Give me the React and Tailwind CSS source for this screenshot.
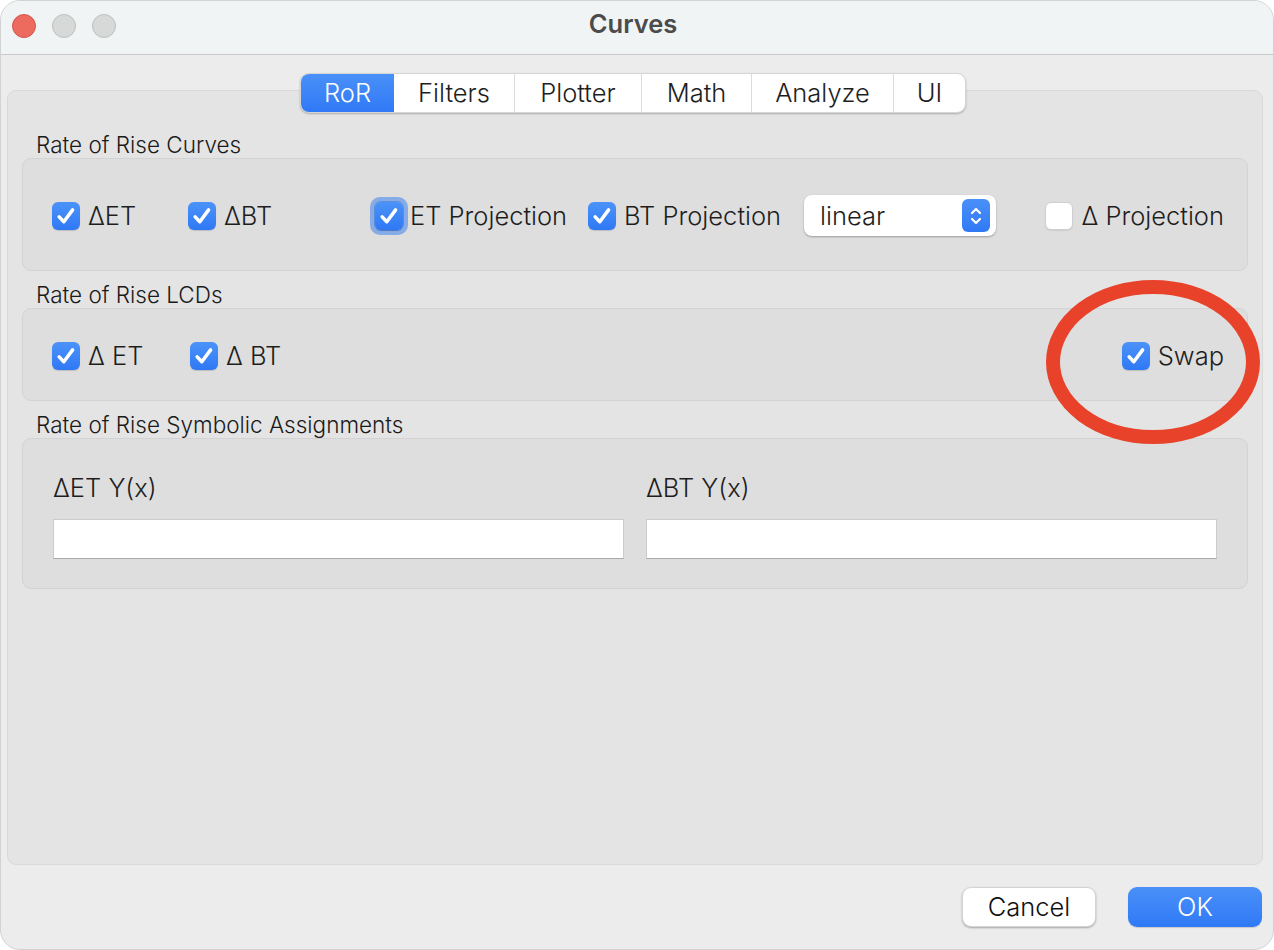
import React from "react";

const FONT = { fontFamily: "Inter, 'Noto Sans', 'Liberation Sans', sans-serif" };

function Check({ checked = true, focus = false }) {
  const box = checked ? (
    <div className="w-[28px] h-[28px] rounded-[6px] bg-gradient-to-b from-[#4b93f9] to-[#2f78f5] flex items-center justify-center shadow-[0_1px_1px_rgba(0,0,0,0.15)]">
      <svg width="22" height="22" viewBox="0 0 20 20" fill="none">
        <path d="M3.8 10.8 L8 15.2 L16 4.4" stroke="white" strokeWidth="3.2" strokeLinecap="round" strokeLinejoin="round" />
      </svg>
    </div>
  ) : (
    <div className="w-[28px] h-[28px] rounded-[6px] bg-white border border-[#cfcfcf] shadow-[0_1px_1px_rgba(0,0,0,0.08)]" />
  );
  if (!focus) return box;
  return (
    <div className="-m-[6px] p-[4px] rounded-[10px] bg-[#6f9ee6]/80 shrink-0">
      <div className="rounded-[7px] border border-[#5b8fe0]">{box}</div>
    </div>
  );
}

function Item({ label, checked, focus, w }) {
  return (
    <div className="flex items-center gap-[8px] shrink-0" style={{ width: w }}>
      <Check checked={checked} focus={focus} />
      <span className="text-[25.5px] font-light text-[#1e1e1e] leading-none whitespace-nowrap">{label}</span>
    </div>
  );
}

function SectionLabel({ children }) {
  return (
    <div className="ml-[14px] h-[24px] flex items-center text-[22.5px] font-light text-[#1a1a1a] leading-none">
      {children}
    </div>
  );
}

function Group({ className, children }) {
  return (
    <div className={`rounded-[9px] bg-[#dedede] border border-[#d3d3d3] ${className}`}>{children}</div>
  );
}

export default function App() {
  const tabs = [
    { name: "RoR", w: 93 },
    { name: "Filters", w: 120 },
    { name: "Plotter", w: 127 },
    { name: "Math", w: 110 },
    { name: "Analyze", w: 142 },
    { name: "UI", w: 72 },
  ];

  return (
    <div className="w-[1274px] h-[950px] bg-white" style={FONT}>
      <div className="relative w-[1274px] h-[950px] rounded-[20px] overflow-hidden bg-[#ececec] border border-[#d2d2d2] flex flex-col">
        {/* title bar */}
        <div className="h-[54px] shrink-0 bg-[#f1f4f4] border-b border-[#c9c9c9] flex items-center relative">
          <div className="flex items-center gap-[16px] pl-[11px] -mt-[4px]">
            <div className="w-[24px] h-[24px] rounded-full bg-[#ec6a5e] border border-[#d5574c]" />
            <div className="w-[24px] h-[24px] rounded-full bg-[#d6d9d8] border border-[#bdbfbe]" />
            <div className="w-[24px] h-[24px] rounded-full bg-[#d6d9d8] border border-[#bdbfbe]" />
          </div>
          <div className="absolute inset-0 flex items-center justify-center pointer-events-none pb-[6px]">
            <span className="text-[25.5px] font-semibold text-[#4b4b4b] -ml-[8px]">Curves</span>
          </div>
        </div>

        {/* body */}
        <div className="flex-1 flex flex-col pl-[6px] pr-[10px] pt-[18px]">
          {/* tabs */}
          <div className="relative z-10 flex justify-center">
            <div className="flex h-[40px] rounded-[9px] bg-white shadow-[0_1px_2px_rgba(0,0,0,0.25)] border border-[#d6d6d6] overflow-hidden -ml-[4px]">
              {tabs.map((t, i) => (
                <div
                  key={t.name}
                  style={{ width: t.w }}
                  className={`flex items-center justify-center text-[25.5px] font-light leading-none ${
                    i === 0
                      ? "bg-gradient-to-b from-[#4a90f8] to-[#2f79f6] text-white"
                      : "text-[#1e1e1e]"
                  } ${i > 1 ? "border-l border-[#dcdcdc]" : ""}`}
                >
                  {t.name}
                </div>
              ))}
            </div>
          </div>

          {/* panel */}
          <div className="-mt-[23px] h-[775px] rounded-[9px] bg-[#e4e4e4] border border-[#d9d9d9] pt-[42px] px-[14px] flex flex-col">
            <SectionLabel>Rate of Rise Curves</SectionLabel>
            <Group className="mt-[1px] h-[113px] flex items-center pl-[29px] pr-[23px] pt-[2px]">
              <Item label="ΔET" w={136} />
              <Item label="ΔBT" w={188} />
              <Item label="ET Projection" w={212} focus />
              <Item label="BT Projection" w={216} />
              <div className="w-[192px] h-[41px] rounded-[8px] bg-white shadow-[0_1px_2px_rgba(0,0,0,0.3)] flex items-center justify-between pl-[16px] pr-[6px] shrink-0">
                <span className="text-[25.5px] font-light text-[#1e1e1e] leading-none">linear</span>
                <div className="w-[28px] h-[33px] rounded-[6px] bg-gradient-to-b from-[#4a90f8] to-[#2f79f6] flex items-center justify-center">
                  <svg width="16" height="24" viewBox="0 0 16 24" fill="none">
                    <path d="M4 9 L8 5 L12 9" stroke="white" strokeWidth="2.2" strokeLinecap="round" strokeLinejoin="round" />
                    <path d="M4 15 L8 19 L12 15" stroke="white" strokeWidth="2.2" strokeLinecap="round" strokeLinejoin="round" />
                  </svg>
                </div>
              </div>
              <div className="flex-1" />
              <Item label="Δ Projection" checked={false} />
            </Group>

            <div className="mt-[12px]">
              <SectionLabel>Rate of Rise LCDs</SectionLabel>
            </div>
            <Group className="mt-[1px] h-[93px] flex items-center pl-[29px] pr-[23px] pt-[2px]">
              <Item label="Δ ET" w={138} />
              <Item label="Δ BT" />
              <div className="flex-1" />
              <Item label="Swap" />
            </Group>

            <div className="mt-[12px]">
              <SectionLabel>Rate of Rise Symbolic Assignments</SectionLabel>
            </div>
            <Group className="mt-[1px] h-[151px] grid grid-cols-2 gap-[22px] pl-[30px] pr-[30px] pt-[36px]">
              <div className="flex flex-col gap-[18px]">
                <span className="text-[25.5px] font-light text-[#1e1e1e] leading-none">ΔET Y(x)</span>
                <div className="h-[40px] bg-white border border-[#cbcbcb] border-b-[#a9a9a9]" />
              </div>
              <div className="flex flex-col gap-[18px]">
                <span className="text-[25.5px] font-light text-[#1e1e1e] leading-none">ΔBT Y(x)</span>
                <div className="h-[40px] bg-white border border-[#cbcbcb] border-b-[#a9a9a9]" />
              </div>
            </Group>
          </div>

          {/* buttons */}
          <div className="flex justify-end gap-[32px] mt-[22px] pr-[1px]">
            <div className="w-[134px] h-[40px] rounded-[9px] bg-white border border-[#d3d3d3] shadow-[0_1px_2px_rgba(0,0,0,0.3)] flex items-center justify-center text-[25.5px] font-light text-[#111] leading-none">
              Cancel
            </div>
            <div className="w-[134px] h-[40px] rounded-[9px] bg-gradient-to-b from-[#4a90f8] to-[#2f79f6] flex items-center justify-center text-[25.5px] font-light text-white leading-none shadow-[0_1px_1px_rgba(0,0,0,0.15)]">
              OK
            </div>
          </div>
        </div>

        {/* annotation ellipse */}
        <svg className="absolute left-0 top-0 pointer-events-none" width="1274" height="950">
          <ellipse cx="1152" cy="361" rx="100" ry="75" fill="none" stroke="#e8432a" strokeWidth="14" />
        </svg>
      </div>
    </div>
  );
}
